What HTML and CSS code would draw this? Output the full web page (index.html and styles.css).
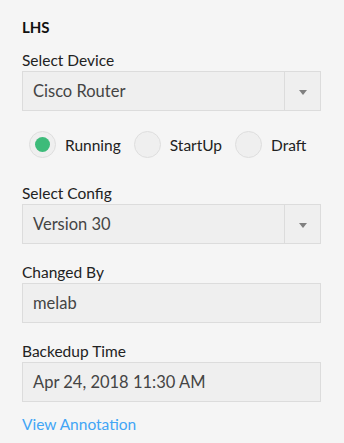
FILE: index.html
```html
<!DOCTYPE html>
<html>
<head>
<meta charset="utf-8">
<link rel="stylesheet" href="styles.css">
</head>
<body>
<div class="panel">
  <div class="title">LHS</div>
  <div class="label">Select Device</div>
  <div class="select">
    <div class="select-value">Cisco Router</div>
    <div class="select-arrow"><span class="caret"></span></div>
  </div>
  <div class="radios">
    <label class="radio"><span class="dot checked"></span><span class="radio-text">Running</span></label>
    <label class="radio"><span class="dot"></span><span class="radio-text">StartUp</span></label>
    <label class="radio"><span class="dot"></span><span class="radio-text">Draft</span></label>
  </div>
  <div class="label">Select Config</div>
  <div class="select config">
    <div class="select-value">Version 30</div>
    <div class="select-arrow"><span class="caret"></span></div>
  </div>
  <div class="label">Changed By</div>
  <div class="field">melab</div>
  <div class="label">Backedup Time</div>
  <div class="field last">Apr 24, 2018 11:30 AM</div>
  <a class="link" href="#">View Annotation</a>
</div>
</body>
</html>
```
FILE: styles.css
```css
html, body {
  margin: 0;
  padding: 0;
  background: #f5f5f5;
}
body {
  font-family: Lato, "Open Sans", Arial, sans-serif;
  color: #222;
  width: 344px;
  height: 443px;
  overflow: hidden;
}
.panel {
  padding: 17px 23px 0 22px;
  display: flex;
  flex-direction: column;
}
.title {
  font-weight: bold;
  font-size: 15px;
  line-height: 20px;
  color: #111;
  margin-bottom: 13px;
}
.label {
  font-size: 15.5px;
  line-height: 20px;
  color: #222;
  margin-bottom: 1px;
}
.select, .field {
  border: 1px solid #dcdcdc;
  background: #efefef;
  box-sizing: border-box;
  height: 40px;
  display: flex;
  align-items: center;
  font-size: 16.5px;
  color: #444;
}
.select-value {
  flex: 1;
  padding-left: 10px;
}
.field {
  padding-left: 10px;
  margin-bottom: 18px;
}
.field.last {
  margin-bottom: 12px;
}
.select.config {
  margin-bottom: 18px;
}
.select-arrow {
  width: 35px;
  height: 100%;
  border-left: 1px solid #dcdcdc;
  display: flex;
  align-items: center;
  justify-content: center;
}
.caret {
  width: 0;
  height: 0;
  border-left: 4px solid transparent;
  border-right: 4px solid transparent;
  border-top: 5px solid #808080;
  margin-top: 2px;
}
.radios {
  display: flex;
  align-items: center;
  padding-left: 7px;
  margin: 20px 0 25px;
}
.radio {
  display: flex;
  align-items: center;
  margin-right: 13px;
}
.dot {
  width: 27px;
  height: 27px;
  border-radius: 50%;
  border: 1px solid #dedede;
  background: #efefef;
  box-sizing: border-box;
  display: flex;
  align-items: center;
  justify-content: center;
}
.dot.checked::after {
  content: "";
  width: 15px;
  height: 15px;
  border-radius: 50%;
  background: #3dbb7a;
}
.radio-text {
  font-size: 15.5px;
  color: #222;
  margin-left: 9px;
}
.link {
  font-size: 15.5px;
  line-height: 20px;
  color: #42a5f5;
  text-decoration: none;
  align-self: flex-start;
}
```
